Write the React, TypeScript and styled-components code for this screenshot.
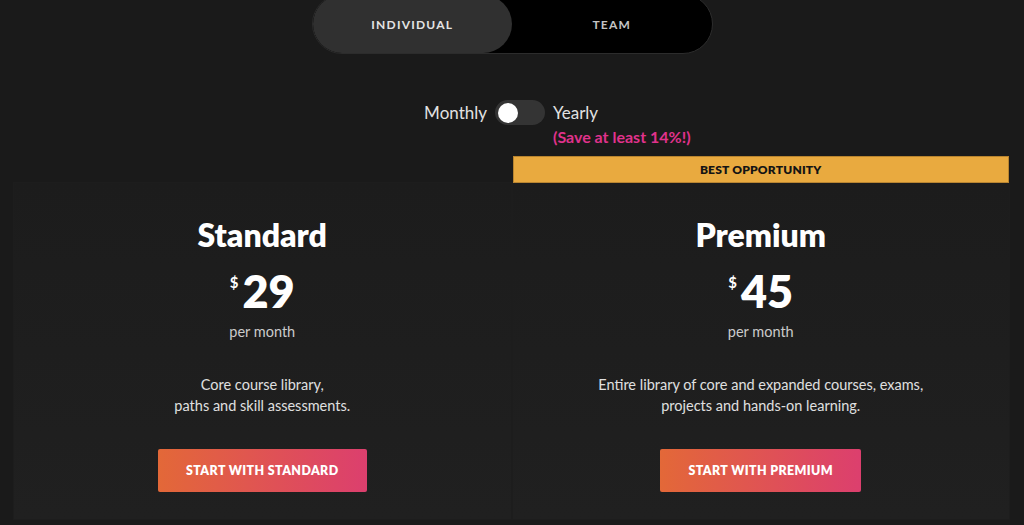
import React from 'react'
import styled, { createGlobalStyle } from 'styled-components'

const Global = createGlobalStyle`
  html, body {
    margin: 0;
    padding: 0;
    overflow: hidden;
    background: #1a1a1a;
  }
  body {
    font-family: Lato, "Open Sans", Arial, sans-serif;
    color: #fff;
  }
`

const Page = styled.div`
  display: flex;
  flex-direction: column;
  align-items: center;
`

const Tabs = styled.div`
  margin-top: -6px;
  width: 401px;
  height: 60px;
  box-sizing: border-box;
  display: grid;
  grid-template-columns: 1fr 1fr;
  background: #000;
  border: 1px solid #2c2c2c;
  border-radius: 30px;
`

const Tab = styled.div<{ active?: boolean }>`
  display: flex;
  align-items: center;
  justify-content: center;
  padding-top: 1px;
  border-radius: 30px;
  background: ${p => (p.active ? '#303030' : 'transparent')};
  color: ${p => (p.active ? '#e4e4e4' : '#c4c4c4')};
  font-size: 12px;
  font-weight: 700;
  letter-spacing: 1.2px;
`

const Billing = styled.div`
  margin-top: 46px;
  width: 100%;
  box-sizing: border-box;
  padding-left: 16px;
  display: grid;
  grid-template-columns: 1fr auto 1fr;
  column-gap: 8px;
  align-items: start;
`

const Label = styled.div<{ right?: boolean }>`
  height: 25px;
  line-height: 25px;
  font-size: 17px;
  color: #e2e2e2;
  text-align: ${p => (p.right ? 'right' : 'left')};
`

const YearlyCol = styled.div`
  display: flex;
  flex-direction: column;
`

const Save = styled.div`
  margin-top: 2px;
  font-size: 16px;
  font-weight: 700;
  color: #e0328c;
  white-space: nowrap;
`

const Switch = styled.div`
  width: 50px;
  height: 25px;
  border-radius: 13px;
  background: #343434;
  display: flex;
  align-items: center;
  padding: 0 3px;
  box-sizing: border-box;
`

const Knob = styled.div`
  width: 20px;
  height: 20px;
  border-radius: 50%;
  background: #fff;
`

const Plans = styled.div`
  margin-top: 10px;
  width: 100%;
  box-sizing: border-box;
  padding: 0 15px 0 14px;
  display: grid;
  grid-template-columns: 1fr 1fr;
  column-gap: 2px;
  align-items: end;
`

const Plan = styled.div`
  display: flex;
  flex-direction: column;
`

const Banner = styled.div`
  height: 27px;
  box-sizing: border-box;
  display: flex;
  align-items: center;
  justify-content: center;
  background: #e9aa3f;
  border: 1px solid #b8842f;
  color: #141414;
  font-size: 12px;
  font-weight: 800;
  letter-spacing: 0.2px;
`

const Card = styled.div`
  height: 336px;
  box-sizing: border-box;
  padding-top: 34px;
  display: flex;
  flex-direction: column;
  align-items: center;
  background: linear-gradient(180deg, #1c1c1c 0%, #202020 100%);
  box-shadow: 0 0 0 1px rgba(255, 255, 255, 0.015);
`

const Title = styled.div`
  font-size: 32px;
  line-height: 36px;
  font-weight: 800;
  color: #fff;
`

const Price = styled.div`
  margin-top: 14px;
  height: 48px;
  display: flex;
  align-items: flex-start;
  color: #fff;
`

const Currency = styled.span`
  font-size: 15px;
  font-weight: 700;
  line-height: 15px;
  margin-top: 8px;
  margin-right: 4px;
`

const Amount = styled.span`
  font-size: 45px;
  font-weight: 800;
  line-height: 48px;
`

const Period = styled.div`
  margin-top: 7px;
  font-size: 14.5px;
  line-height: 20px;
  color: #cbcbcb;
`

const Desc = styled.div`
  margin-top: 32px;
  font-size: 14.5px;
  line-height: 21px;
  color: #e0e0e0;
  text-align: center;
`

const Cta = styled.button`
  margin-top: 33px;
  height: 43px;
  padding: 0 28px;
  border: none;
  border-radius: 2px;
  background: linear-gradient(90deg, #e36838 0%, #dc3f6e 100%);
  color: #fff;
  font-family: inherit;
  font-size: 12.4px;
  font-weight: 800;
  letter-spacing: 0.4px;
  cursor: pointer;
`

const Note = styled.div`
  margin-top: 3px;
  text-align: center;
  font-size: 14px;
  color: #333;
  b {
    color: #4d1a2c;
  }
`

const plans = [
  {
    name: 'Standard',
    price: 29,
    desc: ['Core course library,', 'paths and skill assessments.'],
    cta: 'START WITH STANDARD',
  },
  {
    name: 'Premium',
    price: 45,
    desc: ['Entire library of core and expanded courses, exams,', 'projects and hands-on learning.'],
    cta: 'START WITH PREMIUM',
    banner: 'BEST OPPORTUNITY',
  },
]

export default function App() {
  return (
    <Page>
      <Global />
      <Tabs>
        <Tab active>INDIVIDUAL</Tab>
        <Tab>TEAM</Tab>
      </Tabs>

      <Billing>
        <Label right>Monthly</Label>
        <Switch>
          <Knob />
        </Switch>
        <YearlyCol>
          <Label>Yearly</Label>
          <Save>(Save at least 14%!)</Save>
        </YearlyCol>
      </Billing>

      <Plans>
        {plans.map(p => (
          <Plan key={p.name}>
            {p.banner && <Banner>{p.banner}</Banner>}
            <Card>
              <Title>{p.name}</Title>
              <Price>
                <Currency>$</Currency>
                <Amount>{p.price}</Amount>
              </Price>
              <Period>per month</Period>
              <Desc>
                {p.desc[0]}
                <br />
                {p.desc[1]}
              </Desc>
              <Cta>{p.cta}</Cta>
            </Card>
            <Note>
              or start a <b>FREE</b> trial
            </Note>
          </Plan>
        ))}
      </Plans>
    </Page>
  )
}
